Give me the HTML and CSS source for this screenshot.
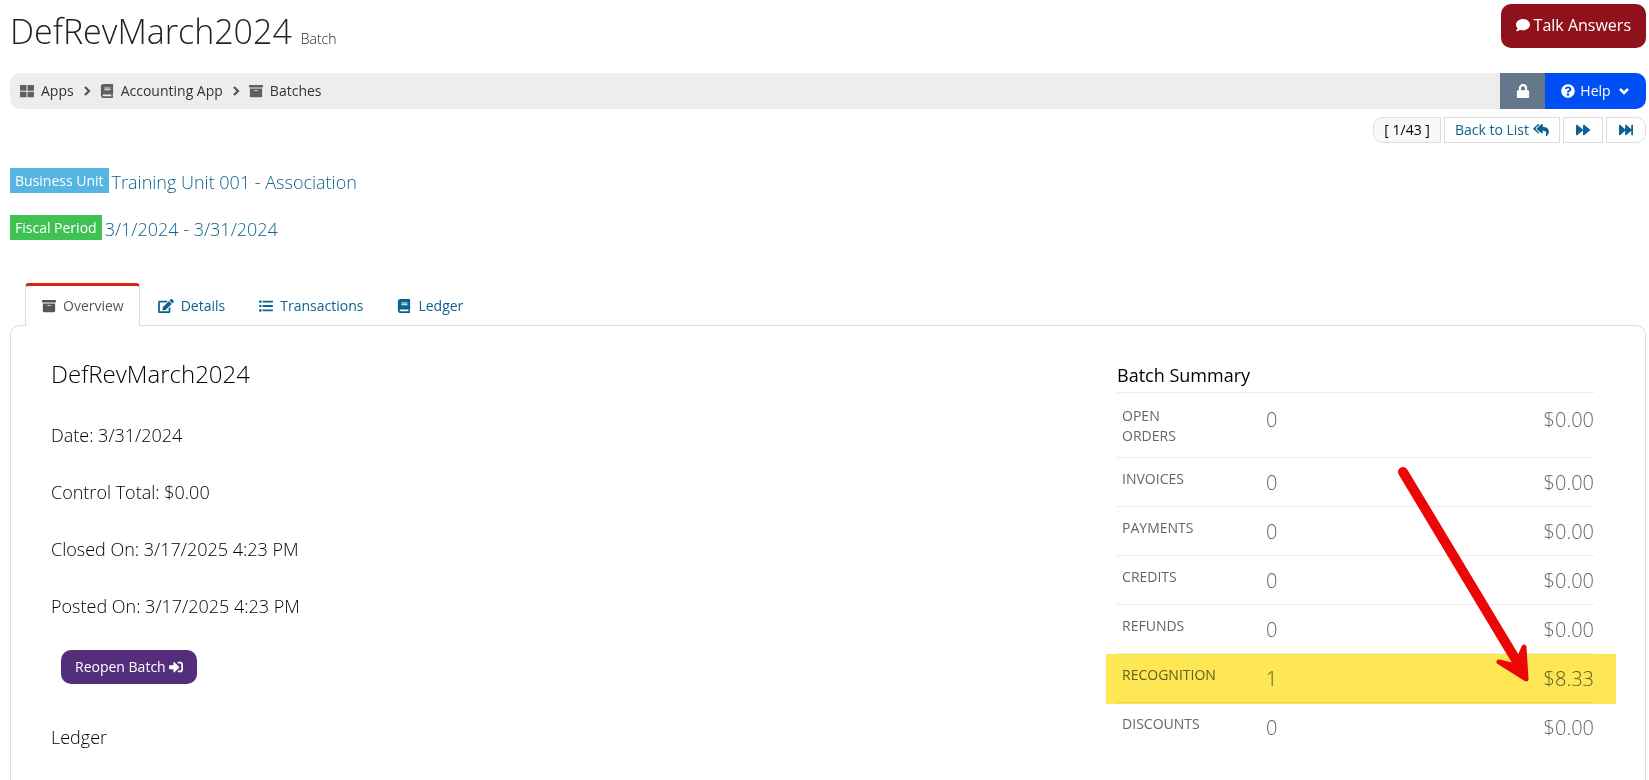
FILE: index.html
```html
<!DOCTYPE html>
<html lang="en">
<head>
<meta charset="utf-8">
<title>DefRevMarch2024 - Batch</title>
<link rel="stylesheet" href="styles.css">
</head>
<body>
<svg class="sprite" aria-hidden="true">
  <symbol id="i-apps" viewBox="0 0 512 512"><path d="M24 40h214v204H24a24 24 0 0 1-24-24V64a24 24 0 0 1 24-24zM274 40h214a24 24 0 0 1 24 24v156a24 24 0 0 1-24 24H274zM0 280h238v204H24a24 24 0 0 1-24-24zM274 280h238v180a24 24 0 0 1-24 24H274z"/></symbol>
  <symbol id="i-book" viewBox="0 0 448 512"><path d="M448 360V24c0-13.300-10.700-24-24-24H96C43 0 0 43 0 96v320c0 53 43 96 96 96h328c13.300 0 24-10.700 24-24v-16c0-7.500-3.500-14.300-8.900-18.700-4.200-15.400-4.200-59.300 0-74.700 5.400-4.300 8.900-11.100 8.900-18.600zM128 134c0-3.300 2.700-6 6-6h212c3.300 0 6 2.700 6 6v20c0 3.300-2.700 6-6 6H134c-3.300 0-6-2.700-6-6v-20zm0 64c0-3.300 2.700-6 6-6h212c3.300 0 6 2.700 6 6v20c0 3.300-2.700 6-6 6H134c-3.300 0-6-2.700-6-6v-20zm253.400 250H96c-17.700 0-32-14.300-32-32 0-17.600 14.400-32 32-32h285.400c-1.900 17.100-1.900 46.900 0 64z"/></symbol>
  <symbol id="i-archive" viewBox="0 0 512 512"><path d="M32 448c0 17.700 14.300 32 32 32h384c17.700 0 32-14.300 32-32V160H32v288zm160-212c0-6.600 5.400-12 12-12h104c6.600 0 12 5.400 12 12v8c0 6.600-5.400 12-12 12H204c-6.600 0-12-5.400-12-12v-8zM480 32H32C14.300 32 0 46.300 0 64v48c0 8.800 7.200 16 16 16h480c8.800 0 16-7.200 16-16V64c0-17.700-14.300-32-32-32z"/></symbol>
  <symbol id="i-comment" viewBox="0 0 512 512"><path d="M256 32C114.600 32 0 125.100 0 240c0 49.600 21.400 95 57 130.700C44.500 421.100 2.700 466 2.200 466.500c-2.200 2.300-2.800 5.700-1.500 8.700S4.800 480 8 480c66.300 0 116-31.800 140.600-51.400 32.700 12.300 69 19.400 107.400 19.400 141.400 0 256-93.100 256-208S397.400 32 256 32z"/></symbol>
  <symbol id="i-lock" viewBox="0 0 448 512"><path d="M400 224h-24v-72C376 68.200 307.800 0 224 0S72 68.200 72 152v72H48c-26.500 0-48 21.500-48 48v192c0 26.500 21.500 48 48 48h352c26.500 0 48-21.500 48-48V272c0-26.500-21.500-48-48-48zm-104 0H152v-72c0-39.700 32.300-72 72-72s72 32.300 72 72v72z"/></symbol>
  <symbol id="i-question" viewBox="0 0 512 512"><path d="M504 256c0 136.997-111.043 248-248 248S8 392.997 8 256C8 119.083 119.043 8 256 8s248 111.083 248 248zM262.655 90c-54.497 0-89.255 22.957-116.549 63.758-3.536 5.286-2.353 12.415 2.715 16.258l34.699 26.310c5.205 3.947 12.621 3.008 16.665-2.122 17.864-22.658 30.113-35.797 57.303-35.797 20.429 0 45.698 13.148 45.698 32.958 0 14.976-12.363 22.667-32.534 33.976C247.128 238.528 216 254.941 216 296v4c0 6.627 5.373 12 12 12h56c6.627 0 12-5.373 12-12v-1.333c0-28.462 83.186-29.647 83.186-106.667 0-58.002-60.165-102-116.531-102zM256 338c-25.365 0-46 20.635-46 46 0 25.364 20.635 46 46 46s46-20.636 46-46c0-25.365-20.635-46-46-46z"/></symbol>
  <symbol id="i-reply-all" viewBox="0 0 576 512"><path d="M136.309 189.836L312.313 37.851C327.720 24.546 352 35.348 352 56.015v82.763c129.182 10.231 224 52.212 224 183.548 0 61.441-39.582 122.309-83.333 154.132-13.653 9.931-33.111-2.533-28.077-18.631 38.512-123.162-3.922-169.482-112.590-182.015v84.175c0 20.701-24.300 31.453-39.687 18.164L136.309 226.164c-11.071-9.561-11.086-26.753 0-36.328zm-128 36.328L184.313 378.150C199.700 391.439 224 380.687 224 359.986v-15.818l-108.606-93.785A55.960 55.960 0 0 1 96 207.998a55.953 55.953 0 0 1 19.393-42.380L224 71.832V56.015c0-20.667-24.280-31.469-39.687-18.164L8.309 189.836c-11.086 9.575-11.071 26.767 0 36.328z"/></symbol>
  <symbol id="i-forward" viewBox="0 0 512 512"><path d="M500.500 231.400l-192-160C287.900 54.300 256 68.600 256 96v320c0 27.400 31.900 41.800 52.500 24.600l192-160c15.300-12.800 15.300-36.400 0-49.200zm-256 0l-192-160C31.900 54.300 0 68.600 0 96v320c0 27.400 31.900 41.800 52.500 24.600l192-160c15.300-12.800 15.300-36.400 0-49.200z"/></symbol>
  <symbol id="i-fast-forward" viewBox="0 0 512 512"><path d="M512 76v360c0 6.600-5.400 12-12 12h-40c-6.600 0-12-5.400-12-12V284.100L276.500 440.600c-20.600 17.200-52.500 2.800-52.500-24.600V284.100L52.500 440.600C31.900 457.800 0 443.400 0 416V96c0-27.400 31.900-41.700 52.500-24.600L224 226.800V96c0-27.400 31.900-41.700 52.500-24.600L448 226.800V76c0-6.600 5.400-12 12-12h40c6.600 0 12 5.400 12 12z"/></symbol>
  <symbol id="i-edit" viewBox="0 0 576 512"><path d="M402.600 83.200l90.200 90.200c3.800 3.800 3.800 10 0 13.800L274.400 405.600l-92.800 10.300c-12.400 1.400-22.900-9.100-21.500-21.500l10.300-92.800L388.800 83.200c3.800-3.800 10-3.800 13.800 0zm162-22.900l-48.800-48.800c-15.200-15.200-39.900-15.200-55.200 0l-35.400 35.400c-3.800 3.800-3.800 10 0 13.800l90.200 90.200c3.800 3.800 10 3.800 13.800 0l35.400-35.400c15.200-15.300 15.200-40 0-55.200zM384 346.200V448H64V128h229.800c3.200 0 6.200-1.300 8.500-3.500l40-40c7.600-7.600 2.200-20.500-8.500-20.500H48C21.500 64 0 85.500 0 112v352c0 26.500 21.500 48 48 48h352c26.500 0 48-21.500 48-48V306.200c0-10.700-12.900-16-20.500-8.500l-40 40c-2.200 2.300-3.500 5.300-3.500 8.500z"/></symbol>
  <symbol id="i-list" viewBox="0 0 512 512"><circle cx="48" cy="96" r="46"/><circle cx="48" cy="256" r="46"/><circle cx="48" cy="416" r="46"/><rect x="128" y="60" width="384" height="70" rx="16"/><rect x="128" y="221" width="384" height="70" rx="16"/><rect x="128" y="382" width="384" height="70" rx="16"/></symbol>
  <symbol id="i-sign-in" viewBox="0 0 512 512"><path d="M416 448h-84c-6.600 0-12-5.400-12-12v-40c0-6.600 5.400-12 12-12h84c17.700 0 32-14.300 32-32V160c0-17.700-14.300-32-32-32h-84c-6.600 0-12-5.400-12-12V76c0-6.600 5.400-12 12-12h84c53 0 96 43 96 96v192c0 53-43 96-96 96zm-47-201L201 79c-15-15-41-4.500-41 17v96H24c-13.300 0-24 10.700-24 24v96c0 13.300 10.700 24 24 24h136v96c0 21.500 26 32 41 17l168-168c9.300-9.400 9.300-24.600 0-34z"/></symbol>
  <symbol id="i-right" viewBox="0 0 8 12"><path d="M2 2l4 4-4 4" fill="none" stroke="currentColor" stroke-width="2.200"/></symbol>
  <symbol id="i-down" viewBox="0 0 12 8"><path d="M2 2l4 4 4-4" fill="none" stroke="currentColor" stroke-width="2.500"/></symbol>
</svg>

<div class="page">
  <header class="page-header">
    <h1 class="page-title">DefRevMarch2024 <small class="page-kind">Batch</small></h1>
    <button class="talk-button" type="button"><svg class="icon"><use href="#i-comment"/></svg>Talk Answers</button>
  </header>

  <div class="toolbar">
    <nav class="breadcrumb" aria-label="Breadcrumb">
      <a class="crumb" href="#apps"><svg class="icon"><use href="#i-apps"/></svg>Apps</a>
      <svg class="crumb-arrow"><use href="#i-right"/></svg>
      <a class="crumb" href="#accounting"><svg class="icon"><use href="#i-book"/></svg>Accounting App</a>
      <svg class="crumb-arrow"><use href="#i-right"/></svg>
      <a class="crumb" href="#batches"><svg class="icon"><use href="#i-archive"/></svg>Batches</a>
    </nav>
    <button class="lock-button" type="button" aria-label="Security"><svg class="icon"><use href="#i-lock"/></svg></button>
    <button class="help-button" type="button"><svg class="icon"><use href="#i-question"/></svg>Help<svg class="caret"><use href="#i-down"/></svg></button>
  </div>

  <nav class="pager" aria-label="Records">
    <span class="pager-item pager-count">[ 1/43 ]</span>
    <a class="pager-item" href="#list">Back to List<svg class="icon icon-wide"><use href="#i-reply-all"/></svg></a>
    <a class="pager-item pager-step" href="#next" aria-label="Next"><svg class="icon"><use href="#i-forward"/></svg></a>
    <a class="pager-item pager-step" href="#last" aria-label="Last"><svg class="icon"><use href="#i-fast-forward"/></svg></a>
  </nav>

  <section class="facts">
    <div class="fact"><span class="label label-unit">Business Unit</span><a href="#unit">Training Unit 001 - Association</a></div>
    <div class="fact"><span class="label label-period">Fiscal Period</span><a href="#period">3/1/2024 - 3/31/2024</a></div>
  </section>

  <nav class="tabs" aria-label="Batch sections">
    <a class="tab tab-active" href="#overview" aria-current="page"><svg class="icon"><use href="#i-archive"/></svg>Overview</a>
    <a class="tab" href="#details"><svg class="icon icon-wide"><use href="#i-edit"/></svg>Details</a>
    <a class="tab" href="#transactions"><svg class="icon"><use href="#i-list"/></svg>Transactions</a>
    <a class="tab" href="#ledger"><svg class="icon"><use href="#i-book"/></svg>Ledger</a>
  </nav>

  <main class="panel">
    <section class="overview">
      <h2 class="batch-name">DefRevMarch2024</h2>
      <p class="detail">Date: 3/31/2024</p>
      <p class="detail">Control Total: $0.00</p>
      <p class="detail">Closed On: 3/17/2025 4:23 PM</p>
      <p class="detail">Posted On: 3/17/2025 4:23 PM</p>
      <button class="reopen-button" type="button">Reopen Batch<svg class="icon"><use href="#i-sign-in"/></svg></button>
      <h3 class="ledger-title">Ledger</h3>
    </section>

    <section class="summary">
      <table class="summary-table">
        <caption>Batch Summary</caption>
        <tbody>
          <tr class="row-first"><th scope="row">OPEN ORDERS</th><td>0</td><td class="amount">$0.00</td></tr>
          <tr><th scope="row">INVOICES</th><td>0</td><td class="amount">$0.00</td></tr>
          <tr><th scope="row">PAYMENTS</th><td>0</td><td class="amount">$0.00</td></tr>
          <tr><th scope="row">CREDITS</th><td>0</td><td class="amount">$0.00</td></tr>
          <tr><th scope="row">REFUNDS</th><td>0</td><td class="amount">$0.00</td></tr>
          <tr class="row-marked"><th scope="row">RECOGNITION</th><td>1</td><td class="amount">$8.33</td></tr>
          <tr><th scope="row">DISCOUNTS</th><td>0</td><td class="amount">$0.00</td></tr>
        </tbody>
      </table>
      <svg class="pointer" viewBox="0 0 140 224" aria-hidden="true">
        <path class="pointer-shaft" d="M9 9L122 197"/>
        <path class="pointer-head" d="M130 184L132 216L105 199L122 203Z"/>
      </svg>
    </section>
  </main>
</div>
</body>
</html>
```
FILE: styles.css
```css
* {
  box-sizing: border-box;
}

body {
  margin: 0;
  background: #fff;
  color: #000;
  font: 400 14px/20px "Open Sans", "Noto Sans", sans-serif;
}

a {
  color: #0d638f;
  text-decoration: none;
}

button {
  border: 0;
  color: #fff;
  font: inherit;
}

.sprite {
  position: absolute;
  width: 0;
  height: 0;
}

.icon {
  width: 14px;
  height: 14px;
  flex: none;
  fill: currentColor;
}

.icon-wide {
  width: 16px;
}

.page {
  display: flex;
  flex-direction: column;
  min-height: 100vh;
  padding: 4px 3px 0 10px;
}

.page-header {
  display: flex;
  justify-content: space-between;
  align-items: flex-start;
  height: 69px;
}

.page-title {
  margin: 0;
  color: #222;
  font-size: 34px;
  font-weight: 300;
  line-height: 54px;
}

.page-kind {
  font-size: 14px;
}

.talk-button {
  display: flex;
  align-items: center;
  gap: 4px;
  height: 44px;
  padding: 0 15px 2px;
  border-radius: 10px;
  background: #8f111c;
  font-size: 16px;
}

.toolbar {
  display: flex;
  height: 36px;
  overflow: hidden;
  border-radius: 10px;
  background: #ededed;
}

.breadcrumb {
  display: flex;
  flex: 1;
  align-items: center;
  gap: 9px;
  padding-left: 10px;
}

.crumb {
  display: flex;
  align-items: center;
  gap: 7px;
  color: #333;
}

.crumb .icon {
  color: #606060;
}

.crumb-arrow {
  width: 8px;
  height: 12px;
  color: #555;
}

.lock-button,
.help-button {
  display: flex;
  align-items: center;
  justify-content: center;
}

.lock-button {
  width: 45px;
  background: #65788b;
}

.help-button {
  gap: 5px;
  width: 101px;
  background: #004ff5;
}

.caret {
  width: 12px;
  height: 8px;
  margin-left: 2px;
}

.pager {
  display: flex;
  justify-content: flex-end;
  gap: 3px;
  margin-top: 8px;
}

.pager-item {
  display: flex;
  align-items: center;
  gap: 4px;
  height: 26px;
  padding: 0 10px;
  border: 1px solid #ddd;
}

.pager-count {
  border-radius: 10px 0 0 10px;
  background: #f9f9f9;
}

.pager-step {
  justify-content: center;
  width: 40px;
  padding: 0;
}

.pager-step:last-child {
  border-radius: 0 10px 10px 0;
}

.facts {
  display: grid;
  gap: 22px;
  margin: 25px 0 43px;
}

.fact {
  display: flex;
  gap: 3px;
  height: 25px;
  font-size: 18px;
  font-weight: 300;
  line-height: 28px;
}

.label {
  padding: 0 5px;
  color: #fff;
  font-size: 14px;
  font-weight: 400;
  line-height: 25px;
}

.label-unit {
  background: #57b5e3;
}

.label-period {
  background: #3fc153;
}

.tabs {
  display: flex;
  gap: 2px;
  padding-left: 15px;
}

.tab {
  display: flex;
  align-items: center;
  gap: 7px;
  height: 42px;
  padding: 3px 16px 0;
}

.tab-active {
  position: relative;
  height: 43px;
  margin-bottom: -1px;
  padding: 0 15px 0 16px;
  border: 1px solid #ddd;
  border-top: 3px solid #d9230f;
  border-bottom: 0;
  border-radius: 4px 4px 0 0;
  background: #fff;
  color: #555;
}

.panel {
  display: grid;
  flex: 1;
  grid-template-columns: 38fr 17fr;
  padding: 32px 51px 0 40px;
  border: 1px solid #ddd;
  border-bottom: 0;
  border-radius: 10px 10px 0 0;
}

.batch-name {
  margin: 0 0 32px;
  font-size: 24px;
  font-weight: 300;
  line-height: 32px;
}

.detail,
.ledger-title {
  margin: 0 0 31px;
  font-size: 18px;
  font-weight: 300;
  line-height: 26px;
}

.reopen-button {
  display: flex;
  align-items: center;
  gap: 3px;
  height: 34px;
  margin: 0 0 40px 10px;
  padding: 0 14px;
  border-radius: 10px;
  background: #532f7b;
}

.summary {
  position: relative;
}

.summary-table {
  width: 100%;
  border-collapse: collapse;
  table-layout: fixed;
}

.summary-table caption {
  height: 34px;
  padding-top: 4px;
  font-size: 18px;
  line-height: 26px;
  text-align: left;
}

.summary-table tr {
  position: relative;
  height: 49px;
  border-top: 1px solid #ececec;
}

.summary-table th,
.summary-table td {
  padding: 11px 0 0;
  color: #666;
  font-weight: 400;
  text-align: left;
  vertical-align: top;
}

.summary-table th {
  width: 149px;
  padding: 11px 52px 0 5px;
}

.summary-table td {
  font-size: 20px;
  font-weight: 300;
  line-height: 28px;
}

.summary-table .row-first {
  height: 65px;
}

.summary-table .row-first th,
.summary-table .row-first td {
  padding-top: 13px;
}

.summary-table td.amount {
  text-align: right;
}

.row-marked th::after {
  position: absolute;
  inset: -1px -22px -1px -11px;
  background: #fde755;
  content: "";
  mix-blend-mode: multiply;
}

.pointer {
  position: absolute;
  top: 105px;
  right: 60px;
  width: 140px;
  height: 224px;
  fill: #eb0707;
  stroke: #eb0707;
  stroke-linejoin: round;
}

.pointer-shaft {
  stroke-linecap: round;
  stroke-width: 10px;
}

.pointer-head {
  stroke-width: 5px;
}
```
